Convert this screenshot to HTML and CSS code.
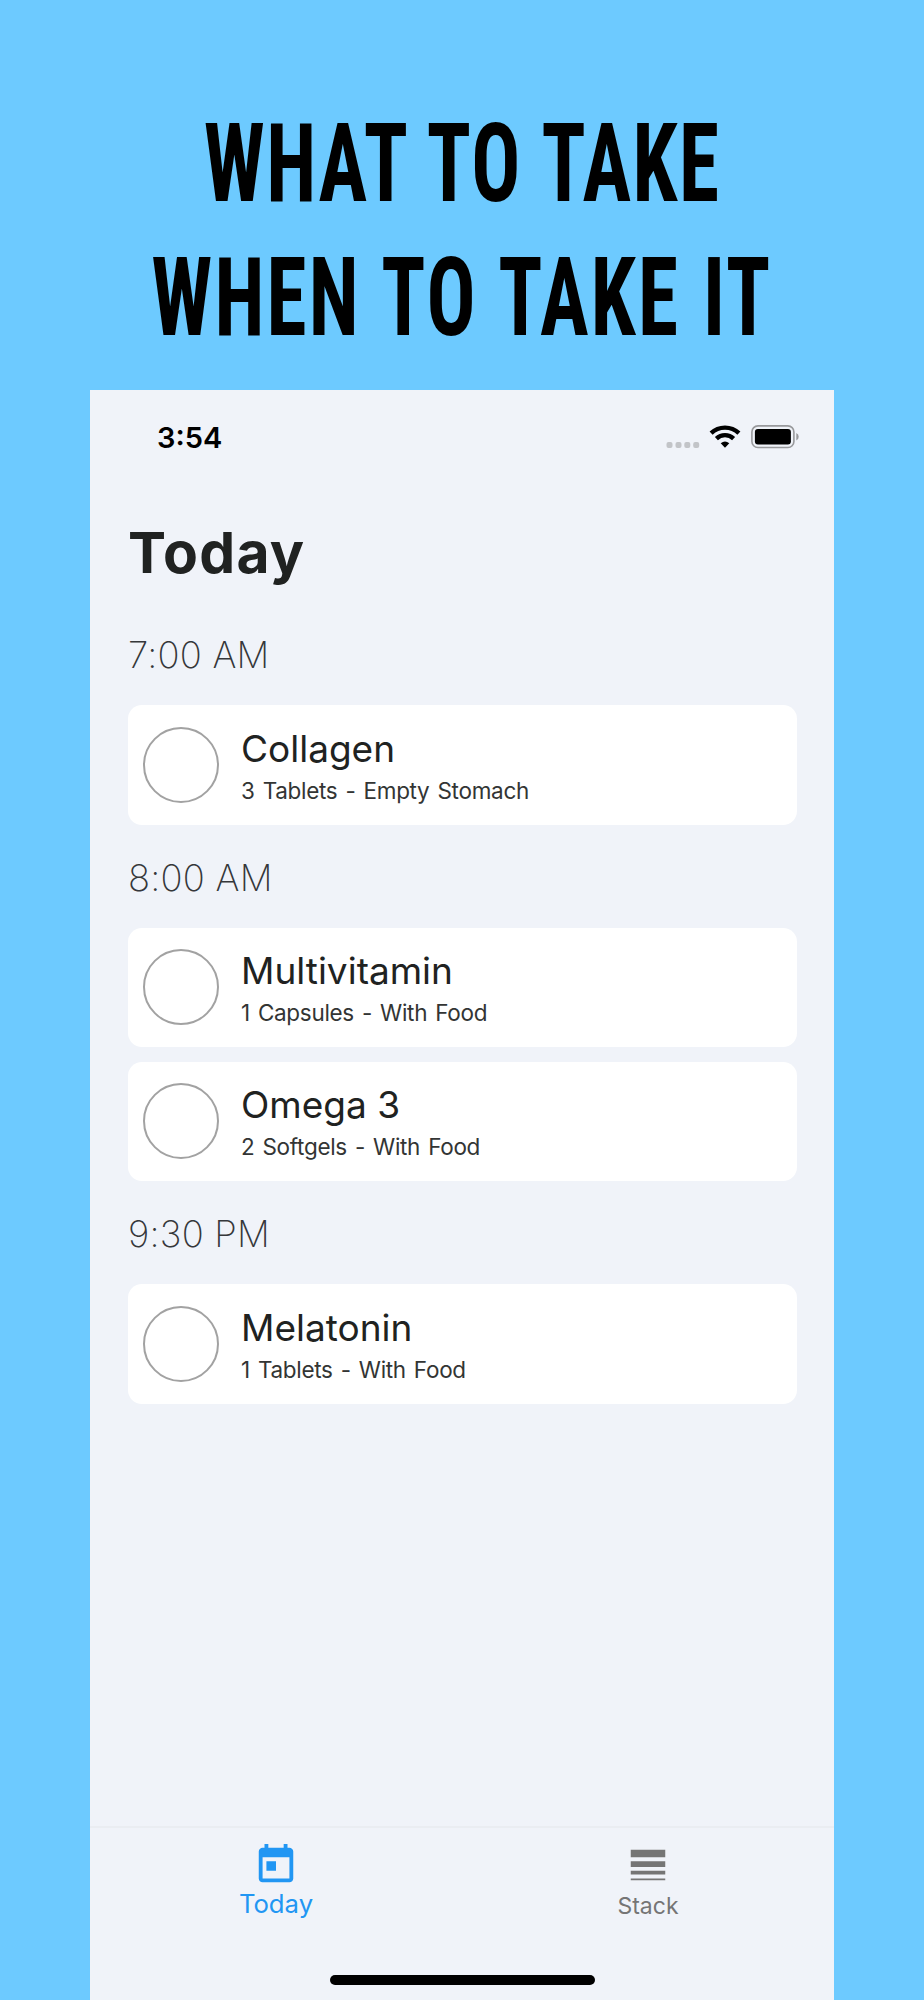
FILE: index.html
```
<!DOCTYPE html>
<html lang="en">
<head>
    <meta charset="UTF-8">
    <meta name="viewport" content="width=device-width, initial-scale=1.0">
    <title>Today</title>
    <link rel="stylesheet" href="styles.css">
</head>
<body>

    <h1 class="headline">
        <span class="line line-one">WHAT TO TAKE</span>
        <span class="line line-two">WHEN TO TAKE IT</span>
    </h1>

    <div class="phone">

        <!-- Status bar -->
        <div class="status-bar">
            <span class="clock">3:54</span>
            <div class="status-icons">
                <svg class="signal" width="34" height="8" viewBox="0 0 34 8" fill="#c2c4c8">
                    <rect x="0.5" y="1" width="6" height="6" rx="2"/>
                    <rect x="9.5" y="1" width="6" height="6" rx="2"/>
                    <rect x="18.3" y="1" width="6" height="6" rx="2"/>
                    <rect x="27.2" y="1" width="6" height="6" rx="2"/>
                </svg>
                <svg class="wifi" width="32" height="24" viewBox="0 0 32 24" fill="none" stroke="#000" stroke-width="4.4">
                    <path d="M2.1 8.2 A20 20 0 0 1 29.9 8.2"/>
                    <path d="M7.4 13.6 A12.4 12.4 0 0 1 24.6 13.6"/>
                    <path d="M11.7 18.3 Q16 14.8 20.3 18.3 L16 22.8 Z" fill="#000" stroke="none"/>
                </svg>
                <svg class="battery" width="48" height="24" viewBox="0 0 48 24">
                    <rect x="0.9" y="0.9" width="42" height="21.6" rx="6" fill="none" stroke="#98999c" stroke-width="1.6"/>
                    <rect x="3.9" y="3.9" width="36" height="15.6" rx="3" fill="#000"/>
                    <path d="M45.3 8 Q47.7 9 47.7 11.7 Q47.7 14.4 45.3 15.4 Z" fill="#98999c"/>
                </svg>
            </div>
        </div>

        <!-- Schedule -->
        <div class="schedule">
            <h2 class="title">Today</h2>

            <h3 class="time">7:00 AM</h3>
            <div class="card">
                <span class="check"></span>
                <div class="info">
                    <p class="name">Collagen</p>
                    <p class="dose">3 Tablets - Empty Stomach</p>
                </div>
            </div>

            <h3 class="time">8:00 AM</h3>
            <div class="card">
                <span class="check"></span>
                <div class="info">
                    <p class="name">Multivitamin</p>
                    <p class="dose">1 Capsules - With Food</p>
                </div>
            </div>
            <div class="card">
                <span class="check"></span>
                <div class="info">
                    <p class="name">Omega 3</p>
                    <p class="dose">2 Softgels - With Food</p>
                </div>
            </div>

            <h3 class="time">9:30 PM</h3>
            <div class="card">
                <span class="check"></span>
                <div class="info">
                    <p class="name">Melatonin</p>
                    <p class="dose">1 Tablets - With Food</p>
                </div>
            </div>
        </div>

        <!-- Bottom navigation -->
        <div class="tab-bar">
            <div class="tabs">
                <div class="tab active">
                    <svg width="46" height="46" viewBox="0 0 24 24" fill="currentColor">
                        <path d="M19 3h-1V1h-2v2H8V1H6v2H5c-1.11 0-1.99.9-1.99 2L3 19c0 1.1.89 2 2 2h14c1.1 0 2-.9 2-2V5c0-1.1-.9-2-2-2zm0 16H5V8h14v11zM7 10h5v5H7z"/>
                    </svg>
                    <span>Today</span>
                </div>
                <div class="tab">
                    <svg width="46" height="46" viewBox="0 0 24 24" fill="currentColor">
                        <path d="M3 17h18v-2H3v2zm0 3h18v-1H3v1zm0-7h18v-3H3v3zm0-9v4h18V4H3z"/>
                    </svg>
                    <span>Stack</span>
                </div>
            </div>
            <div class="home-indicator"></div>
        </div>

    </div>

</body>
</html>
```

FILE: styles.css
```
* {
    box-sizing: border-box;
}

body {
    font-family: Inter, "Liberation Sans", sans-serif;
    height: 2000px;
    margin: 0;
    display: flex;
    flex-direction: column;
    align-items: center;
    background-color: #6dcaff;
    overflow: hidden;
}

h1, h2, h3, p {
    margin: 0;
}

/* Poster headline */
.headline {
    display: flex;
    flex-direction: column;
    align-items: center;
    height: 390px;
    padding-top: 97px;
    font-family: Roboto, sans-serif;
    font-size: 110px;
    font-weight: 700;
    font-stretch: 75%;
    line-height: 134px;
    color: #000;
}

.line {
    white-space: nowrap;
    word-spacing: 2.5px;
    transform: scaleX(0.74);
}

.line-one {
    letter-spacing: 2px;
}

.line-two {
    letter-spacing: 3px;
}

/* Phone screen */
.phone {
    display: flex;
    flex-direction: column;
    width: 744px;
    height: 1610px;
    background-color: #f0f3f9;
    color: #202221;
}

.status-bar {
    display: flex;
    justify-content: space-between;
    align-items: center;
    height: 94px;
    padding: 0 35px 0 67px;
}

.clock {
    font-size: 29px;
    font-weight: 600;
    color: #000;
}

.status-icons {
    display: flex;
    align-items: center;
}

.signal {
    margin: 15px 9px 0 0;
}

.wifi {
    margin-right: 10px;
}

/* Schedule list */
.schedule {
    flex: 1;
    padding: 34px 37px 0 38px;
}

.title {
    height: 84px;
    font-size: 57px;
    font-weight: 700;
    letter-spacing: 1.3px;
    line-height: 70px;
}

.time {
    margin: 31px 0 28px;
    font-size: 36.5px;
    font-weight: 200;
    letter-spacing: 0.2px;
    line-height: 44px;
    color: #35373a;
}

.card {
    display: flex;
    align-items: center;
    height: 119.5px;
    margin-bottom: 14.5px;
    padding-left: 15px;
    border-radius: 14px;
    background-color: #fff;
}

.check {
    width: 76px;
    height: 76px;
    margin-right: 22px;
    border: 2px solid #a2a2a2;
    border-radius: 50%;
}

.info {
    padding-top: 3px;
}

.name {
    font-size: 37px;
    line-height: 44px;
}

.dose {
    margin-top: 5px;
    font-size: 22.5px;
    letter-spacing: -0.3px;
    line-height: 30px;
    word-spacing: 2px;
    color: #333534;
}

/* Bottom navigation */
.tab-bar {
    height: 174px;
    border-top: 2px solid #eaedf2;
}

.tabs {
    display: flex;
    height: 143px;
    padding-top: 14px;
}

.tab {
    display: flex;
    flex: 1;
    flex-direction: column;
    align-items: center;
    font-size: 23px;
    line-height: 36px;
    color: #757575;
}

.tab.active {
    font-size: 25.7px;
    line-height: 32px;
    color: #2196f3;
}

.home-indicator {
    width: 265px;
    height: 10px;
    margin: 4px auto 0;
    border-radius: 5px;
    background-color: #000;
}
```
